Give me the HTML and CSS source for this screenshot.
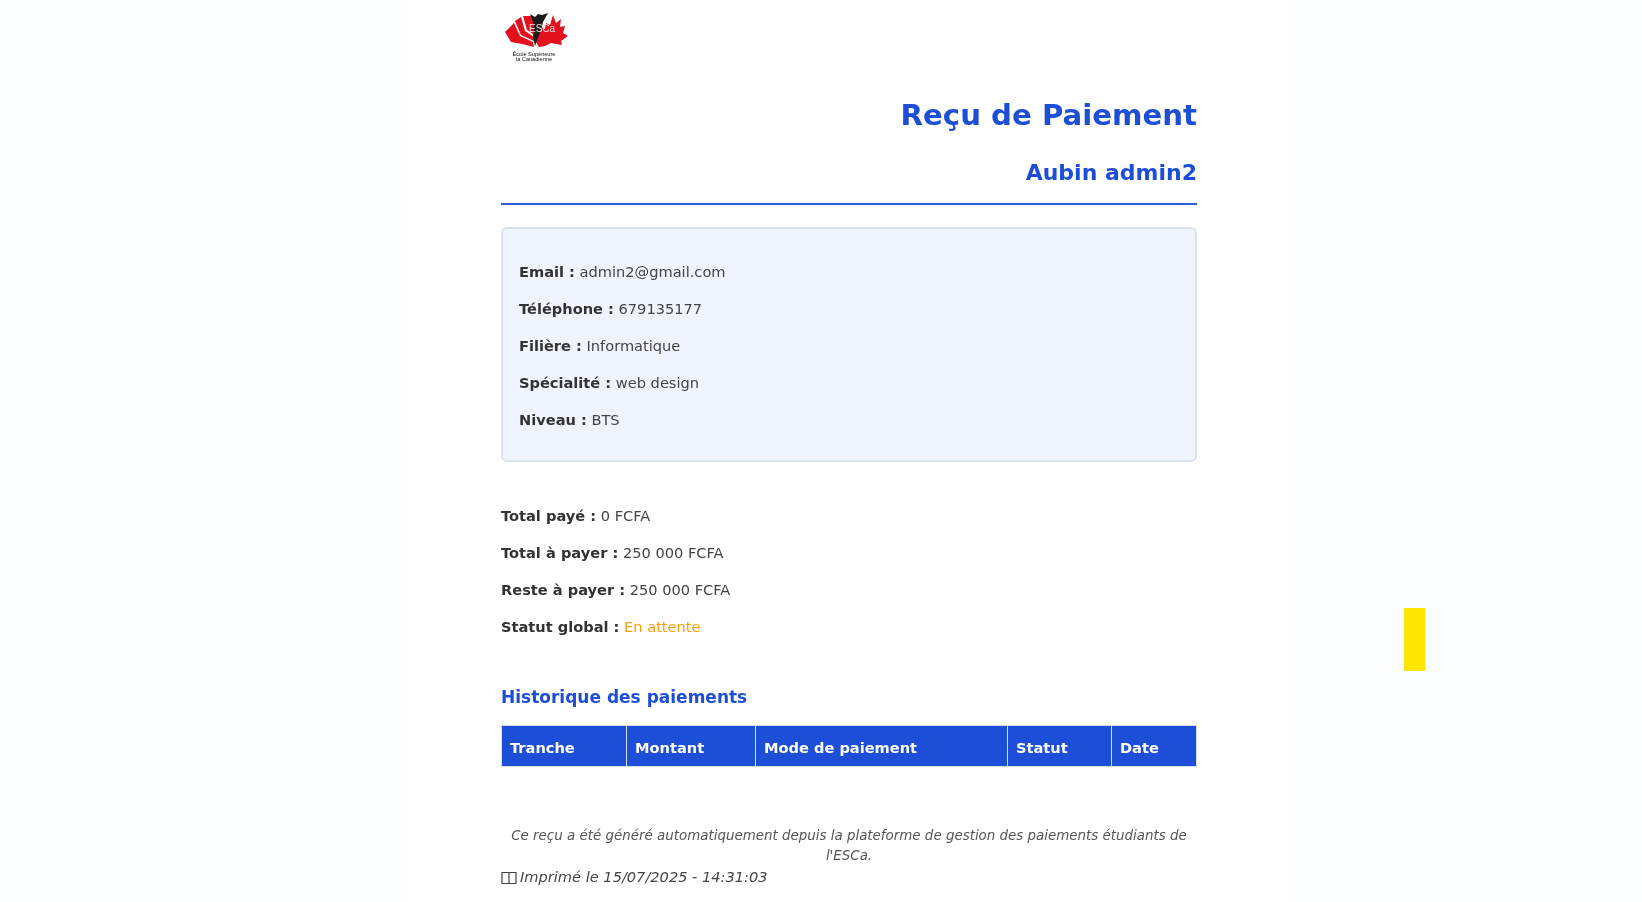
FILE: index.html
```html
<!DOCTYPE html>
<html lang="fr">
  <head>
    <meta charset="utf-8">
    <title>Reçu de Paiement</title>
    <link rel="stylesheet" href="styles.css">
  </head>
  <body>
    <div class="page">
      <main class="receipt">
        <svg class="logo" viewBox="0 0 70 70" width="70" height="70">
          <!-- leaf -->
          <path fill="#e3101e" d="M38 33 L40 27 L44 29 L45 23 L49 25 L52 15 L55 23 L60 19 L59 27 L64 26 L62 33 L67 36 L60 41 L61 45 L50 43 L44 46 L38 47 L35 42 Z"/>
          <!-- book -->
          <path fill="#e3101e" d="M4 32 L13 23 L19 36 L32 42 L33 47 L21 44 L10 42 Z"/>
          <path fill="#e3101e" d="M14 21 L20 17 L24 31 L33 37 L33 41 L20 35 Z"/>
          <path fill="#e3101e" d="M22 16 L30 16 L34 21 L35 36 L26 30 Z"/>
          <!-- figure -->
          <path fill="#1a1a1a" d="M29 14 L34 17 L37 14 L41 15 L47 13 L42 22 L40 30 L37 38 L34 46 L32 37 L33 25 Z"/>
          <text class="logo-mark" x="28" y="32">ESCa</text>
          <text class="logo-text" x="33" y="55.5" text-anchor="middle">École Supérieure</text>
          <text class="logo-text" x="33" y="61" text-anchor="middle">la Canadienne</text>
        </svg>

        <header class="receipt-head">
          <h1>Reçu de Paiement</h1>
          <h2>Aubin admin2</h2>
        </header>

        <section class="student-box">
          <p><b>Email :</b> admin2@gmail.com</p>
          <p><b>Téléphone :</b> 679135177</p>
          <p><b>Filière :</b> Informatique</p>
          <p><b>Spécialité :</b> web design</p>
          <p><b>Niveau :</b> BTS</p>
        </section>

        <section class="totals">
          <p><b>Total payé :</b> 0 FCFA</p>
          <p><b>Total à payer :</b> 250 000 FCFA</p>
          <p><b>Reste à payer :</b> 250 000 FCFA</p>
          <p><b>Statut global :</b> <span class="status-wait">En attente</span></p>
        </section>

        <h3>Historique des paiements</h3>
        <table class="history">
          <thead>
            <tr>
              <th class="col-tranche">Tranche</th>
              <th class="col-montant">Montant</th>
              <th class="col-mode">Mode de paiement</th>
              <th class="col-statut">Statut</th>
              <th>Date</th>
            </tr>
          </thead>
        </table>

        <footer class="receipt-foot">
          <p class="note">Ce reçu a été généré automatiquement depuis la plateforme de gestion des paiements étudiants de l'ESCa.</p>
          <p class="printed"><svg class="book-icon" viewBox="0 0 16 14" width="16" height="14">
              <path d="M1 1.5h14v11H1zM8 1.5v11" fill="none" stroke="#444" stroke-width="1.2"/>
            </svg>Imprimé le 15/07/2025 - 14:31:03</p>
        </footer>
      </main>
    </div>
    <div class="marker"></div>
  </body>
</html>
```

FILE: styles.css
```css
html, body {
  margin: 0;
  height: 902px;
  overflow: hidden;
}

body {
  background: #fcfdff;
  font-family: "DejaVu Sans", sans-serif;
  font-size: 14.6px;
  color: #444;
}

.page {
  margin-left: 408px;
  width: 880px;
  height: 902px;
  background: #fff;
}

.receipt {
  margin-left: 93px;
  width: 696px;
  filter: blur(0.35px);
}

.logo {
  display: block;
  filter: blur(0.5px);
}

.logo-mark {
  font-size: 10px;
  font-family: "Liberation Sans", sans-serif;
  fill: #f6e3df;
}

.logo-text {
  font-size: 5.6px;
  font-family: "Liberation Sans", sans-serif;
  fill: #111;
}

.receipt-head {
  text-align: right;
  color: #1d4ed8;
  border-bottom: 2px solid #2f5de0;
  padding-bottom: 16px;
}

h1 {
  margin: 25px 0 0;
  font-size: 29.2px;
  line-height: 40px;
}

h2 {
  margin: 24px 0 0;
  font-size: 22px;
  line-height: 28px;
}

.student-box {
  margin-top: 22px;
  padding: 32px 16px 29px;
  background: #eff4ff;
  border: 2px solid #dbe2ef;
  border-radius: 6px;
}

p {
  margin: 0 0 15px;
  line-height: 22px;
}

.student-box p:last-child {
  margin-bottom: 0;
}

b {
  color: #333;
}

.totals {
  margin-top: 43px;
}

.status-wait {
  color: #f59e0b;
}

h3 {
  margin: 47px 0 0;
  font-size: 17px;
  line-height: 24px;
  color: #1d4ed8;
}

.history {
  width: 100%;
  margin-top: 16px;
  border-collapse: collapse;
  table-layout: fixed;
}

.history th {
  box-sizing: border-box;
  background: #1d4ed8;
  color: #fff;
  text-align: left;
  font-size: 14.6px;
  height: 41px;
  padding: 2px 8px 0;
  border: 1px solid #d5dcec;
}

.col-tranche { width: 125px; }
.col-montant { width: 129px; }
.col-mode { width: 252px; }
.col-statut { width: 104px; }

.receipt-foot {
  margin-top: 59px;
  font-style: italic;
  font-size: 13.42px;
  color: #555;
}

.note {
  margin: 0;
  line-height: 20px;
  text-align: center;
}

.printed {
  margin: 0;
  font-size: 14.6px;
  line-height: 22px;
  color: #444;
}

.book-icon {
  vertical-align: -3px;
  margin-right: 3px;
}

/* yellow tab lying over the page */
.marker {
  position: absolute;
  left: 1404px;
  top: 608px;
  width: 21px;
  height: 63px;
  background: #ffe600;
}
```
